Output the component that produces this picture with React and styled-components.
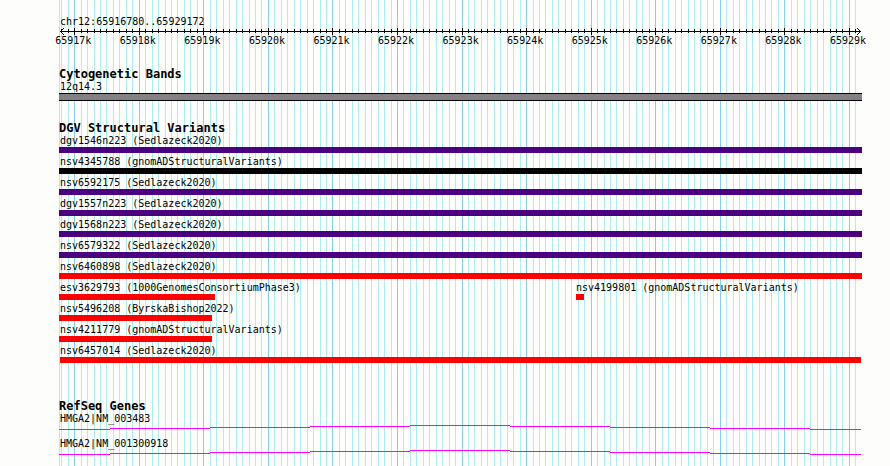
import styled, { createGlobalStyle } from "styled-components";

const START = 65916780;
const END = 65929172;
const MINOR = 100;
const MAJOR = 1000;

const GlobalStyle = createGlobalStyle`
  body {
    margin: 0;
    background: #fdfefc;
  }
`;

const Page = styled.main`
  position: relative;
  box-sizing: border-box;
  min-height: 100vh;
  padding: 15px 28px 11px 59px;
  color: #000;
  font: 10px/13px "DejaVu Sans Mono", monospace;
`;

const Grid = styled.div`
  position: absolute;
  top: 0;
  bottom: 0;
  left: 59px;
  right: 28px;
`;

const GridLine = styled.div`
  position: absolute;
  top: 0;
  bottom: 0;
  left: 0;
  width: 1px;
  background: ${(props) => (props.$major ? "#87ceeb" : "#afeeee")};
`;

const Panel = styled.div`
  position: relative;
`;

const Track = styled.section`
  margin-top: ${(props) => props.$gap || 21}px;
`;

const Title = styled.h2`
  margin: 0;
  font-size: 12px;
  line-height: 12px;
  font-weight: bold;
`;

const Label = styled.div`
  padding-left: ${(props) => (props.$inset ? 1 : 0)}px;
  white-space: nowrap;
`;

const Axis = styled.svg`
  display: block;
  width: 100%;
  height: 7px;
  overflow: visible;
  shape-rendering: crispEdges;
`;

const AxisLabels = styled.div`
  position: relative;
  height: 12px;
  line-height: 12px;
`;

const AxisLabel = styled.span`
  position: absolute;
  top: 0;
  width: 38px;
  margin-left: -19px;
`;

const Band = styled.div`
  height: 6px;
  border: solid #000;
  border-width: 1px 0;
  background: #848084;
`;

const Rows = styled.div`
  display: grid;
  row-gap: 2px;
`;

const Row = styled.div`
  display: grid;
`;

const Feature = styled.div`
  grid-area: 1 / 1;
  min-width: 0;
`;

const Bar = styled.div`
  height: 6px;
  background: ${(props) => props.$color};
`;

const Genes = styled.div`
  display: grid;
  row-gap: 7px;
`;

const Transcript = styled.svg`
  display: block;
  width: calc(100% - 1px);
  height: 5px;
  fill: #ff00ff;
  shape-rendering: crispEdges;
`;

const GAIN_LOSS = "#4b0082";
const LOSS = "#ff0000";
const OTHER = "#000000";

// features without a start or an end run past the edge of the view
const variants = [
  [{ name: "dgv1546n223 (Sedlazeck2020)", color: GAIN_LOSS }],
  [{ name: "nsv4345788 (gnomADStructuralVariants)", color: OTHER }],
  [{ name: "nsv6592175 (Sedlazeck2020)", color: GAIN_LOSS }],
  [{ name: "dgv1557n223 (Sedlazeck2020)", color: GAIN_LOSS }],
  [{ name: "dgv1568n223 (Sedlazeck2020)", color: GAIN_LOSS }],
  [{ name: "nsv6579322 (Sedlazeck2020)", color: GAIN_LOSS }],
  [{ name: "nsv6460898 (Sedlazeck2020)", color: LOSS }],
  [
    { name: "esv3629793 (1000GenomesConsortiumPhase3)", color: LOSS, end: 65919181 },
    { name: "nsv4199801 (gnomADStructuralVariants)", color: LOSS, start: 65924773, end: 65924897 },
  ],
  [{ name: "nsv5496208 (ByrskaBishop2022)", color: LOSS, end: 65919134 }],
  [{ name: "nsv4211779 (gnomADStructuralVariants)", color: LOSS, end: 65919134 }],
  [{ name: "nsv6457014 (Sedlazeck2020)", color: LOSS, start: START, end: 65929188 }],
];

const genes = ["HMGA2|NM_003483", "HMGA2|NM_001300918"];

// the intron line rises to the middle of the view and falls again
const steps = [4, 3, 2, 1, 0, 1, 2, 3, 4];
const stepStart = (i) => (i === 0 ? 0 : ((100 * i - 49) / 802) * 100);

const marks = [];
for (let bp = Math.ceil(START / MINOR) * MINOR; bp <= END; bp += MINOR) {
  marks.push({ bp, major: bp % MAJOR === 0 });
}

function place(bp) {
  const part = (bp - START) / (END - START);
  return `calc(1px + (100% - 3px) * ${part.toFixed(6)})`;
}

function Ruler() {
  return (
    <>
      <Label $inset>chr12:{START}..{END}</Label>
      <Axis aria-hidden="true">
        <rect x="1" y="3" height="1" style={{ width: "calc(100% - 2px)" }} />
        {marks.map(({ bp, major }) => (
          <rect
            key={bp}
            y={major ? 0 : 1}
            width="1"
            height={major ? 7 : 4}
            style={{ x: place(bp) }}
          />
        ))}
        <path d="M2 2h1v1h-1zM3 1h1v1h-1zM4 0h1v1h-1zM2 4h1v1h-1zM3 5h1v1h-1zM4 6h1v1h-1z" />
        <svg x="100%" overflow="visible">
          <path d="M-3 2h1v1h-1zM-4 1h1v1h-1zM-5 0h1v1h-1zM-3 4h1v1h-1zM-4 5h1v1h-1zM-5 6h1v1h-1z" />
        </svg>
      </Axis>
      <AxisLabels>
        {marks.filter((mark) => mark.major).map(({ bp }) => (
          <AxisLabel key={bp} style={{ left: place(bp) }}>{bp / MAJOR}k</AxisLabel>
        ))}
      </AxisLabels>
    </>
  );
}

function Variant({ name, color, start, end }) {
  const left = start ? place(start) : 0;
  const right = end ? `calc(100% - ${place(end)})` : 0;

  return (
    <Feature>
      <Label $inset={!start} style={{ marginLeft: left }}>{name}</Label>
      <Bar $color={color} style={{ marginLeft: left, marginRight: right }} />
    </Feature>
  );
}

export default function App() {
  return (
    <Page>
      <GlobalStyle />
      <Grid aria-hidden="true">
        <GridLine />
        {marks.map(({ bp, major }) => (
          <GridLine key={bp} $major={major} style={{ left: place(bp) }} />
        ))}
      </Grid>
      <Panel>
        <Ruler />
        <Track>
          <Title>Cytogenetic Bands</Title>
          <Label $inset>12q14.3</Label>
          <Band />
        </Track>
        <Track>
          <Title>DGV Structural Variants</Title>
          <Rows>
            {variants.map((row) => (
              <Row key={row[0].name}>
                {row.map((variant) => (
                  <Variant key={variant.name} {...variant} />
                ))}
              </Row>
            ))}
          </Rows>
        </Track>
        <Track $gap={37}>
          <Title>RefSeq Genes</Title>
          <Genes>
            {genes.map((gene) => (
              <div key={gene}>
                <Label $inset>{gene}</Label>
                <Transcript aria-hidden="true">
                  {steps.map((y, i) => {
                    const from = stepStart(i);
                    const to = i === steps.length - 1 ? 100 : stepStart(i + 1);
                    return <rect key={i} x={`${from}%`} y={y} width={`${to - from}%`} height="1" />;
                  })}
                </Transcript>
              </div>
            ))}
          </Genes>
        </Track>
      </Panel>
    </Page>
  );
}
